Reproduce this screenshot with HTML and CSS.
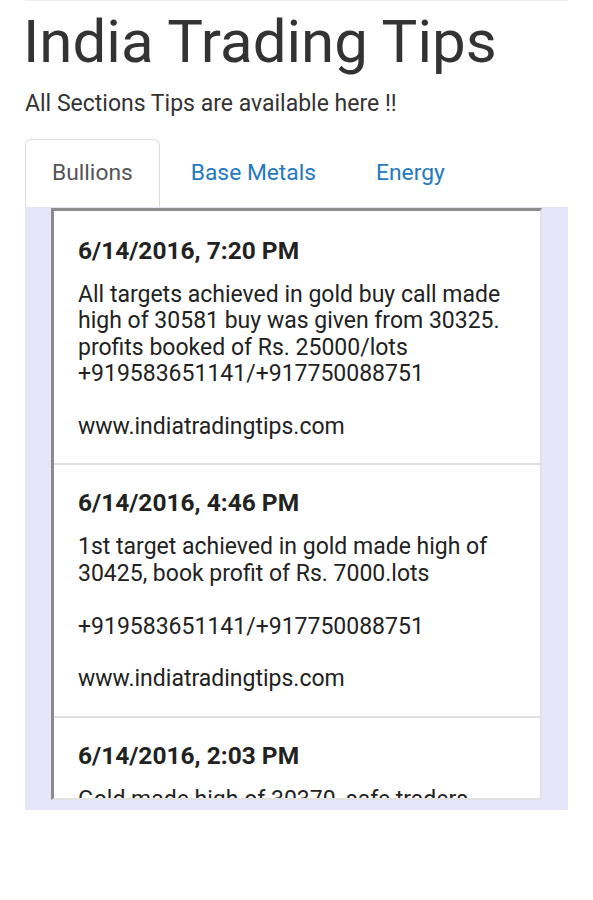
FILE: index.html
```html
<!DOCTYPE html>
<html lang="en">
<head>
  <meta charset="UTF-8" />
  <meta name="viewport" content="width=device-width, initial-scale=1"/>
  <title>India Trading Tips</title>
  <link rel="stylesheet" href="styles.css">
</head>
<body>

<div class="page">
  <h1>India Trading Tips</h1>
  <p class="lead">All Sections Tips are available here !!</p>

  <div class="tabs">
    <a class="tab-btn active" href="#">Bullions</a>
    <a class="tab-btn" href="#">Base Metals</a>
    <a class="tab-btn" href="#">Energy</a>
  </div>

  <!-- Bullions tab -->
  <div class="panel">
    <div class="feed">
      <div class="tip">
        <div class="tip-date">6/14/2016, 7:20 PM</div>
        <p>All targets achieved in gold buy call made high of 30581 buy was given from 30325. profits booked of Rs. 25000/lots +919583651141/+917750088751<br><br>www.indiatradingtips.com</p>
      </div>
      <div class="tip">
        <div class="tip-date">6/14/2016, 4:46 PM</div>
        <p>1st target achieved in gold made high of 30425, book profit of Rs. 7000.lots<br><br>+919583651141/+917750088751<br><br>www.indiatradingtips.com</p>
      </div>
      <div class="tip">
        <div class="tip-date">6/14/2016, 2:03 PM</div>
        <p>Gold made high of 30370, safe traders book profit.<br><br>+919583651141/+917750088751</p>
      </div>
    </div>
  </div>
</div>

</body>
</html>
```

FILE: styles.css
```css
body {
  font-family: Roboto, 'Noto Sans', sans-serif;
  background: #fff;
  color: #222;
  margin: 0;
}
.page {
  margin: 0 25px;
  border-top: 1px solid #eee;
}
h1 {
  font-size: 60px; font-weight: 400; color: #333;
  margin: 0 0 0 -2px; line-height: 81px;
}
.lead {
  font-size: 23px; color: #333;
  margin: 8px 0 21px; line-height: 28px;
}
.tabs { display: flex; }
.tab-btn {
  display: block; height: 67px; line-height: 66px;
  padding: 0 26px; margin-right: 2px;
  font-size: 22.8px; color: #2479c0; text-decoration: none;
  border: 1px solid transparent; border-bottom: none;
  border-radius: 6px 6px 0 0;
}
.tab-btn + .tab-btn { padding: 0 28px; }
.tab-btn.active { color: #555; border-color: #ddd; background: #fff; }
.panel {
  background: #e6e6fa;
  padding: 1px 26px 10px;
}
.feed {
  background: #fff;
  height: 587px; overflow: hidden;
  border-style: solid; border-width: 3px 2px 2px 3px;
  border-color: #8c8c8c #e2e2e2 #e2e2e2 #8c8c8c;
}
.tip {
  padding: 25px 22px 23px 24px;
  border-bottom: 2px solid #e0e0e0;
}
.tip + .tip { padding-top: 23px; }
.tip-date {
  font-size: 24.5px; font-weight: 700; color: #222;
  line-height: 30px;
}
.tip p {
  font-size: 23px; line-height: 26.4px; color: #222;
  margin: 16px 0 0;
}
```
